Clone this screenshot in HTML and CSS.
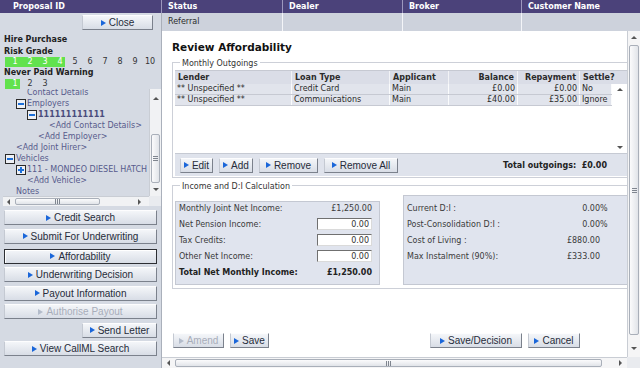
FILE: index.html
```html
<!DOCTYPE html>
<html lang="en">
<head>
    <meta charset="UTF-8">
    <title>Review Affordability</title>
    <link rel="stylesheet" href="styles.css">
</head>
<body>
<div class="app">
    <div class="side-head">Proposal ID</div>
    <div class="cols">
        <div>Status</div><div>Dealer</div><div>Broker</div><div>Customer Name</div>
    </div>
    <div class="close-row"><button class="btn close">Close</button></div>
    <div class="vals">
        <div>Referral</div><div></div><div></div><div></div>
    </div>

    <!-- left panel -->
    <div class="side">
        <div class="info">
            <h4>Hire Purchase</h4>
            <h4 class="short">Risk Grade</h4>
            <div class="grades">
                <span class="on">1</span><span class="on">2</span><span class="on">3</span><span class="on">4</span>
                <span>5</span><span>6</span><span>7</span><span>8</span><span>9</span><span>10</span>
            </div>
            <h4>Never Paid Warning</h4>
            <div class="grades">
                <span class="on">1</span><span>2</span><span>3</span>
            </div>
        </div>
        <div class="tree">
            <div class="tree-list">
                <div class="node i3 first">Contact Details</div>
                <div class="node i2"><span class="box minus"></span>Employers</div>
                <div class="node i3 bold"><span class="box minus"></span>111111111111</div>
                <div class="node i5">&lt;Add Contact Details&gt;</div>
                <div class="node i4">&lt;Add Employer&gt;</div>
                <div class="node i2">&lt;Add Joint Hirer&gt;</div>
                <div class="node i1"><span class="box minus"></span>Vehicles</div>
                <div class="node i2"><span class="box plus"></span>111 - MONDEO DIESEL HATCH</div>
                <div class="node i3">&lt;Add Vehicle&gt;</div>
                <div class="node i2">Notes</div>
            </div>
            <div class="vbar tree-v">
                <div class="arrow up"></div>
                <div class="thumb"></div>
                <div class="track"></div>
                <div class="arrow down"></div>
            </div>
            <div class="hbar tree-h">
                <div class="arrow left"></div>
                <div class="thumb"></div>
                <div class="track"></div>
                <div class="arrow right"></div>
            </div>
            <div class="corner"></div>
        </div>
        <div class="actions">
            <button class="btn">Credit Search</button>
            <button class="btn">Submit For Underwriting</button>
            <button class="btn sel">Affordability</button>
            <button class="btn">Underwriting Decision</button>
            <button class="btn">Payout Information</button>
            <button class="btn" disabled>Authorise Payout</button>
            <button class="btn letter">Send Letter</button>
            <button class="btn">View CallML Search</button>
        </div>
    </div>

    <!-- main area -->
    <div class="view">
        <div class="pane">
            <h1>Review Affordability</h1>

            <fieldset class="outgoings">
                <legend>Monthly Outgoings</legend>
                <div class="grid-head">
                    <div>Lender</div><div>Loan Type</div><div>Applicant</div>
                    <div class="num">Balance</div><div class="num">Repayment</div><div>Settle?</div>
                </div>
                <div class="list">
                    <div class="rows">
                        <div class="row">
                            <div>** Unspecified **</div><div>Credit Card</div><div>Main</div>
                            <div class="num">£0.00</div><div class="num">£0.00</div><div>No</div>
                        </div>
                        <div class="row">
                            <div>** Unspecified **</div><div>Communications</div><div>Main</div>
                            <div class="num">£40.00</div><div class="num">£35.00</div><div>Ignore</div>
                        </div>
                    </div>
                    <div class="vbar list-v">
                        <div class="arrow up"></div>
                        <div class="track"></div>
                        <div class="arrow down"></div>
                    </div>
                </div>
                <div class="bar">
                    <button class="btn w-edit">Edit</button>
                    <button class="btn w-add">Add</button>
                    <button class="btn w-remove">Remove</button>
                    <button class="btn w-all">Remove All</button>
                    <span class="total">Total outgoings:&nbsp; £0.00</span>
                </div>
            </fieldset>

            <fieldset class="income">
                <legend>Income and D:I Calculation</legend>
                <div class="panels">
                    <div class="panel left">
                        <div class="calc-rows">
                            <div class="calc-row"><span class="lbl">Monthly Joint Net Income:</span><span>£1,250.00</span></div>
                            <div class="calc-row"><span class="lbl">Net Pension Income:</span><input class="amt" value="0.00"></div>
                            <div class="calc-row"><span class="lbl">Tax Credits:</span><input class="amt" value="0.00"></div>
                            <div class="calc-row"><span class="lbl">Other Net Income:</span><input class="amt" value="0.00"></div>
                            <div class="calc-row bold"><span class="lbl">Total Net Monthly Income:</span><span>£1,250.00</span></div>
                        </div>
                    </div>
                    <div class="panel right">
                        <div class="calc-row"><span class="lbl">Current D:I :</span><span class="val">0.00</span><span class="unit">%</span></div>
                        <div class="calc-row"><span class="lbl">Post-Consolidation D:I :</span><span class="val">0.00</span><span class="unit">%</span></div>
                        <div class="calc-row"><span class="lbl">Cost of Living :</span><span class="val">£880.00</span><span class="unit"></span></div>
                        <div class="calc-row"><span class="lbl">Max Instalment (90%):</span><span class="val">£333.00</span><span class="unit"></span></div>
                    </div>
                </div>
            </fieldset>

            <div class="foot">
                <button class="btn w-amend" disabled>Amend</button>
                <button class="btn w-save">Save</button>
                <button class="btn w-decision push">Save/Decision</button>
                <button class="btn w-cancel">Cancel</button>
            </div>
        </div>
        <div class="vbar main-v">
            <div class="arrow up"></div>
            <div class="thumb"></div>
            <div class="track"></div>
            <div class="arrow down"></div>
        </div>
        <div class="hbar main-h">
            <div class="arrow left"></div>
            <div class="thumb"></div>
            <div class="track"></div>
            <div class="arrow right"></div>
        </div>
        <div class="corner"></div>
    </div>
</div>
</body>
</html>
```

FILE: styles.css
```css
*{box-sizing: border-box;}
body{
    margin: 0;
    width: 640px;
    height: 368px;
    overflow: hidden;
    background: #fff;
    color: #2b2b2b;
    font: 8px/11px "DejaVu Sans", Verdana, sans-serif;
}
.app{
    display: grid;
    grid-template-columns: 161px 479px;
    grid-template-rows: 13px 18px 337px;
    height: 368px;
}

/* top strip */
.side-head,.cols{
    background: #4b427a;
    color: #fff;
    font-weight: bold;
    line-height: 13px;
}
.side-head{padding-left: 13px;}
.cols,.vals{
    display: grid;
    grid-template-columns: 121px 120px 119px 119px;
}
.cols div{padding-left: 6px;border-left: 1px solid #9c97bd;}
.vals{background: #cdd2dc;line-height: 18px;}
.vals div{padding-left: 6px;border-left: 1px solid #f4f5f8;}
.vals div:first-child{border-left-color: #a9aeb8;}
.close-row{
    background: #d5dae3;
    display: flex;
    justify-content: flex-end;
    padding: 2px 8px 0 0;
}
.close{width: 71px;}

/* buttons */
.btn{
    display: inline-flex;
    align-items: center;
    justify-content: center;
    height: 15px;
    padding: 0;
    font: 10px/13px "Liberation Sans Narrow", "Liberation Sans", Arial, sans-serif;
    color: #262c3a;
    background: linear-gradient(#f4f6f9, #d8dde6);
    border: 1px solid;
    border-color: #fdfdfe #7b818c #7b818c #c4c9d2;
}
.btn::before{
    content: "";
    border-left: 5px solid #1a66d9;
    border-top: 3px solid transparent;
    border-bottom: 3px solid transparent;
    margin-right: 3px;
}
.btn.sel{border: 1px solid #2c2e33;box-shadow: inset 1px 1px #fff;}
.btn:disabled{color: #a8adba;}
.btn:disabled::before{border-left-color: #b3bccb;}

/* left panel */
.side{background: #d5dae3;display: flex;flex-direction: column;}
.info{padding: 3px 0 0 4px;}
.info h4{margin: 0;font-size: 8px;line-height: 12px;color: #222;}
.info h4.short{line-height: 11px;}
.grades{display: flex;height: 10px;line-height: 10px;margin-left: 1px;}
.grades span{width: 15px;padding-left: 5px;text-align: center;color: #333;}
.grades span.on{background: #62e24e;color: #fff;}

.tree{
    height: 116px;
    margin-left: 3px;
    display: grid;
    grid-template-columns: 1fr 12px;
    grid-template-rows: 1fr 10px;
}
.tree-list{overflow: hidden;}
.node{
    display: flex;
    align-items: center;
    height: 11px;
    white-space: nowrap;
    color: #575a8c;
}
.node.first{margin-top: -2px;}
.node.bold{font-weight: bold;color: #4a4c7c;}
.i1{padding-left: 2px;}
.i2{padding-left: 13px;}
.i3{padding-left: 24px;}
.i4{padding-left: 35px;}
.i5{padding-left: 46px;}
.box{
    flex: none;
    width: 10px;
    height: 10px;
    margin-right: 1px;
    border: 1px solid #2a2a2a;
    background: linear-gradient(#1d6fd8, #1d6fd8) center / 6px 2px no-repeat, #eef0f5;
}
.box.plus{
    background: linear-gradient(#1d6fd8, #1d6fd8) center / 6px 2px no-repeat,
                linear-gradient(#1d6fd8, #1d6fd8) center / 2px 6px no-repeat, #eef0f5;
}

.actions{
    display: flex;
    flex-direction: column;
    gap: 3.5px;
    padding: 5px 4px 0 4px;
}
.actions .sel{margin-top: 1.5px;}
.actions .letter{align-self: flex-end;width: 75px;}

/* scrollbars */
.vbar{display: flex;flex-direction: column;background: #f1f2f4;border-left: 1px solid #c9cdd4;}
.hbar{display: flex;align-items: stretch;background: #f1f2f4;border-top: 1px solid #c9cdd4;}
.track{flex: 1;}
.corner{background: #e9ebef;}
.arrow{display: flex;align-items: center;justify-content: center;flex: none;}
.arrow::after{content: "";border: 3px solid transparent;}
.arrow.up::after{border-bottom-color: #555;border-top-width: 0;}
.arrow.down::after{border-top-color: #555;border-bottom-width: 0;}
.arrow.left::after{border-right-color: #555;border-left-width: 0;}
.arrow.right::after{border-left-color: #555;border-right-width: 0;}
.vbar .arrow{height: 11px;}
.hbar .arrow{width: 12px;}
.thumb{
    flex: none;
    display: flex;
    align-items: center;
    justify-content: center;
    border: 1px solid #a9afb9;
    border-radius: 2px;
    background: linear-gradient(90deg, #fbfbfc, #e1e4e9);
}
.vbar .thumb::after{
    content: "";
    width: 5px;
    height: 5px;
    background: repeating-linear-gradient(#7f858f 0 1px, transparent 1px 2px);
}
.hbar .thumb{background: linear-gradient(#fbfbfc, #e1e4e9);}
.hbar .thumb::after{
    content: "";
    width: 5px;
    height: 5px;
    background: repeating-linear-gradient(90deg, #7f858f 0 1px, transparent 1px 2px);
}
.tree-v{padding-top: 3px;padding-bottom: 1px;}
.tree-v .arrow{height: 12px;}
.tree-v .thumb{margin-top: 30px;height: 49px;margin-left: 1px;margin-right: 1px;}
.tree-h .arrow{width: 10px;}
.tree-h .thumb{margin-left: 2px;width: 85px;margin-top: 1px;margin-bottom: 1px;}
.tree-h .arrow.right{margin-right: 5px;}

.main-v{padding-top: 1px;padding-bottom: 3px;background: #f5f5f6;}
.main-v .thumb{margin: 2px 1px 0 1px;height: 290px;}
.main-h{background: #f5f5f6;}
.main-h .thumb{width: 427px;margin: 1px 0 1px 1px;}
.main-h .arrow.right{margin-right: 1px;}

/* main view */
.view{
    display: grid;
    grid-template-columns: 1fr 13px;
    grid-template-rows: 1fr 11px;
    border-left: 1px solid #aab0bb;
    min-width: 0;
}
.pane{overflow: hidden;padding: 10px 0 0 10px;min-width: 0;}
h1{margin: 0 0 1px;font-size: 10.5px;line-height: 13px;color: #111;}

fieldset{
    width: 470px;
    margin: 0;
    padding: 0 2px;
    border: 1px solid #cdd0d8;
}
legend{
    margin-left: 5px;
    padding: 4px 2px 0;
    font-size: 8px;
    line-height: 10px;
    color: #333;
}
.outgoings{padding-bottom: 1px;}
.grid-head,.row{
    display: grid;
    grid-template-columns: 117px 98px 59px 69px 62px 1fr;
}
.grid-head{
    margin-top: 1px;
    background: #dadde7;
    font-weight: bold;
    line-height: 13px;
    border-top: 1px solid #c6c9d2;
}
.grid-head div{padding: 0 3px;border-right: 1px solid #f2f3f6;}
.num{text-align: right;}
.list{display: flex;height: 69px;}
.rows{width: 437px;}
.row{background: #e1e4ec;line-height: 10px;border-bottom: 1px solid #c6c9d2;}
.row div{padding: 0 2px;border-right: 1px solid #fafbfc;white-space: nowrap;}
.list-v{width: 15px;background: #fff;border-left: none;}
.bar{
    display: flex;
    align-items: center;
    gap: 6px;
    height: 23px;
    padding: 0 32px 0 5px;
    background: #dfe3ec;
    border-top: 1px solid #c6cad3;
}
.total{margin-left: auto;font-weight: bold;color: #222;}
.w-edit{width: 33px;}
.w-add{width: 34px;}
.w-remove{width: 59px;}
.w-all{width: 74px;}

.income{margin-top: 1px;padding-bottom: 3px;}
.income legend{padding-top: 3px;}
.panels{display: flex;align-items: flex-end;margin-top: 3px;}
.panel{background: #e0e4ee;border: 1px solid #c4c8d2;color: #3a3a3a;}
.panel.left{width: 205px;height: 84px;padding: 0 7px 0 3px;}
.panel.right{flex: 1;margin-left: 23px;height: 90px;padding: 4px 30px 0 3px;}
.calc-rows{margin-top: -2px;}
.calc-row{display: flex;align-items: center;height: 16px;white-space: nowrap;}
.calc-row.bold{font-weight: bold;color: #222;}
.lbl{flex: 1;}
.amt{
    width: 55px;
    height: 12px;
    padding: 0 2px;
    font: 8px "DejaVu Sans", Verdana, sans-serif;
    color: #333;
    text-align: right;
    background: #fff;
    border: 1px solid;
    border-color: #707070 #dadada #dadada #707070;
}
.val{width: 60px;text-align: right;}
.unit{width: 8px;}

.foot{display: flex;gap: 6px;margin-top: 44px;padding: 0 47px 0 1px;}
.foot .push{margin-left: auto;}
.w-amend{width: 51px;}
.w-save{width: 39px;}
.w-decision{width: 92px;}
.w-cancel{width: 52px;}
```
